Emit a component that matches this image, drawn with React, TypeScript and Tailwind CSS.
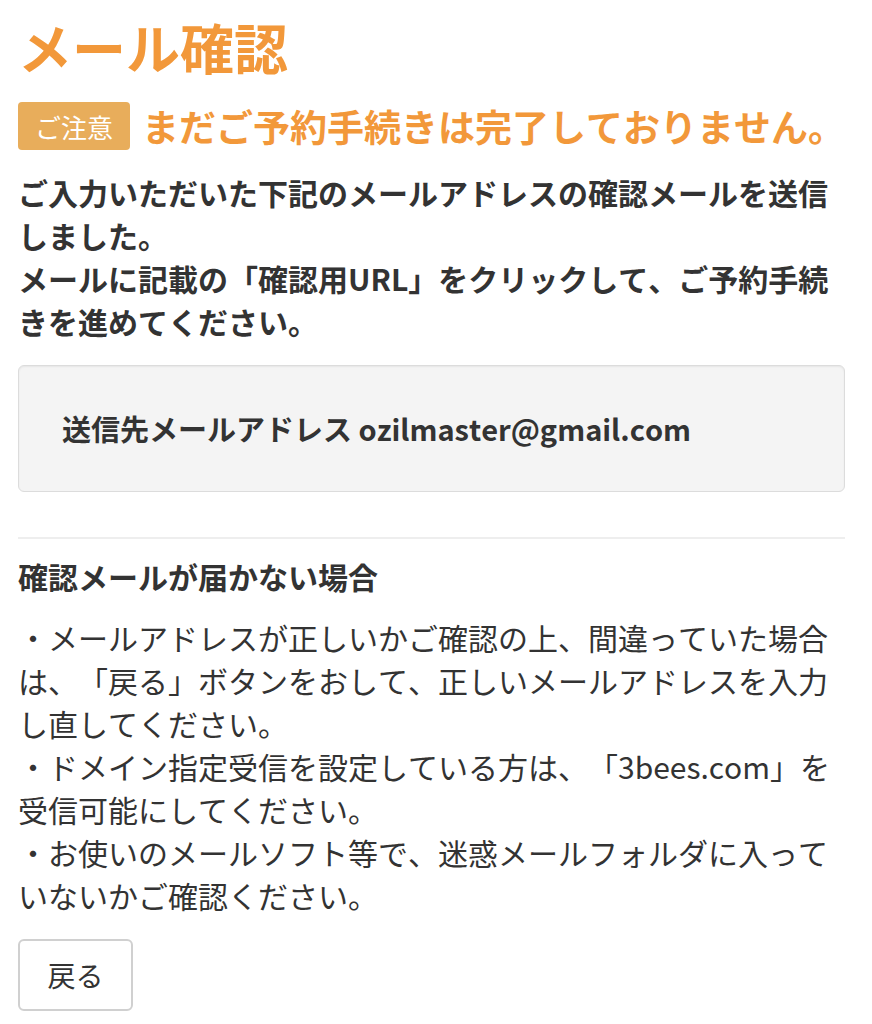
const font = { fontFamily: '"Noto Sans CJK JP", "Noto Sans", sans-serif' };

const notes = [
  ['・メールアドレスが正しいかご確認の上、間違っていた場合', 'は、「戻る」ボタンをおして、正しいメールアドレスを入力', 'し直してください。'],
  ['・ドメイン指定受信を設定している方は、「3bees.com」を', '受信可能にしてください。'],
  ['・お使いのメールソフト等で、迷惑メールフォルダに入って', 'いないかご確認ください。'],
];

export default function App() {
  return (
    <div
      className="min-h-[1024px] bg-white px-[18px] pr-[27px] text-[#333] [text-spacing-trim:space-all] [font-kerning:none]"
      style={font}
    >
      <h1 className="pt-[14px] text-[54px] font-bold leading-[66px] text-[#f2983a]">メール確認</h1>

      <div className="mt-[22px] flex items-center gap-[12px]">
        <span className="flex h-[48px] w-[117px] items-center justify-center rounded-[4px] bg-[#e8ad5b] text-[26px] text-white">
          ご注意
        </span>
        <span className="text-[37px] font-bold leading-[48px] text-[#f2983a] whitespace-nowrap">
          まだご予約手続きは完了しておりません。
        </span>
      </div>

      <p className="mt-[21px] text-[30px] font-bold leading-[43px] whitespace-nowrap">
        ご入力いただいた下記のメールアドレスの確認メールを送信
        <br />
        しました。
        <br />
        メールに記載の「確認用URL」をクリックして、ご予約手続
        <br />
        きを進めてください。
      </p>

      <div className="mt-[22px] flex h-[127px] items-center rounded-[6px] border border-[#dcdcdc] bg-[#f4f4f4] px-[43px] shadow-[inset_0_1px_2px_rgba(0,0,0,0.06)]">
        <span className="text-[29px] font-bold">送信先メールアドレス ozilmaster@gmail.com</span>
      </div>

      <hr className="mt-[45px] border-t-2 border-[#eeeeee]" />

      <h2 className="mt-[16px] text-[30px] font-bold leading-[43px]">確認メールが届かない場合</h2>

      <div className="mt-[18px] text-[30px] leading-[43px] whitespace-nowrap">
        {notes.map((lines, i) => (
          <p key={i}>
            {lines.map((line, j) => (
              <span key={j} className="block">
                {line}
              </span>
            ))}
          </p>
        ))}
      </div>

      <button className="mt-[22px] flex h-[72px] w-[115px] items-center justify-center rounded-[6px] border-2 border-[#d0d0d0] bg-white text-[28px] text-[#333]">
        戻る
      </button>
    </div>
  );
}
